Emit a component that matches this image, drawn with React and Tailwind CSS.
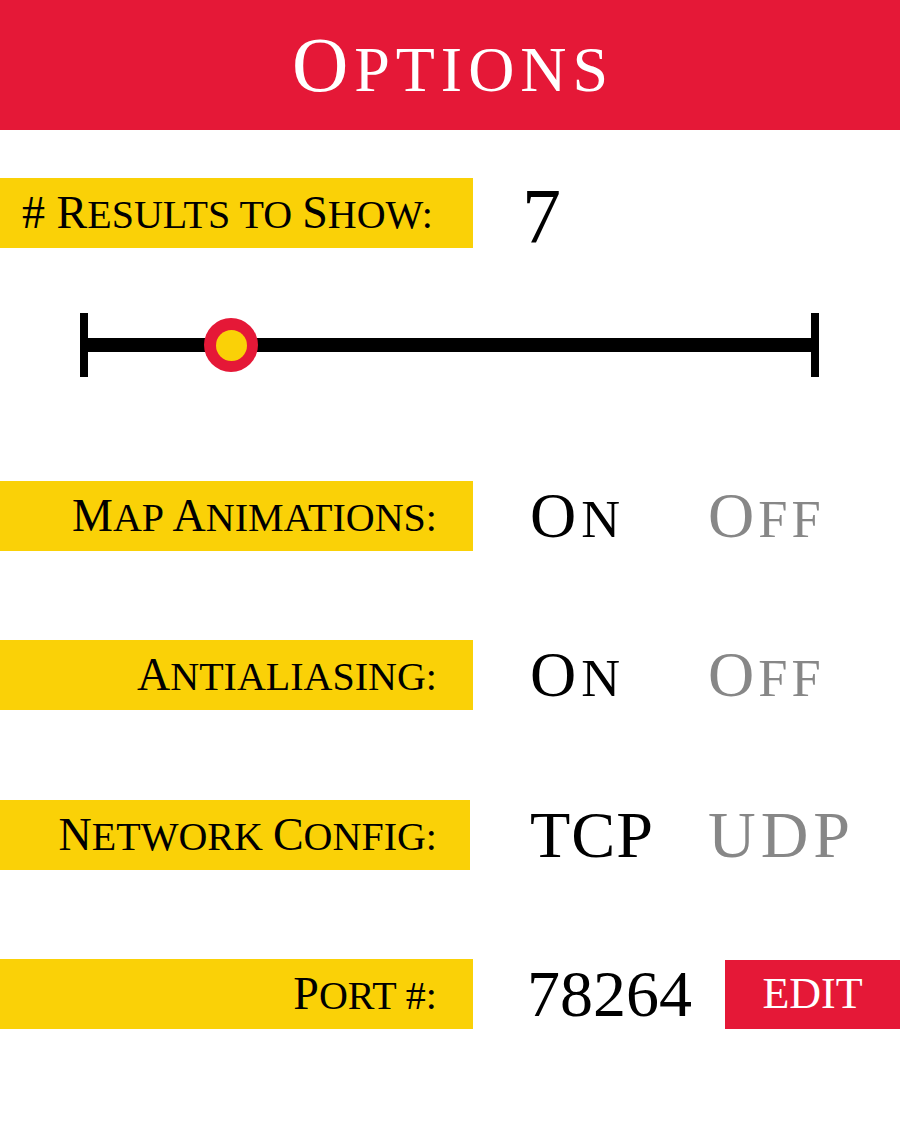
import React from "react";

function SC({ text, small = "text-[0.87em]" }) {
  const parts = [];
  let cur = "";
  let curLower = null;
  for (const ch of text) {
    const isLetter = /[A-Za-z]/.test(ch);
    if (!isLetter) {
      cur += ch;
      continue;
    }
    const isLower = ch >= "a" && ch <= "z";
    if (curLower === null || isLower === curLower) {
      cur += ch;
    } else {
      parts.push([cur, curLower]);
      cur = ch;
    }
    curLower = isLower;
  }
  if (cur) parts.push([cur, curLower]);
  return (
    <>
      {parts.map(([t, low], i) =>
        low ? (
          <span key={i} className={`${small} uppercase`}>
            {t}
          </span>
        ) : (
          <span key={i}>{t}</span>
        )
      )}
    </>
  );
}

function Label({ text, width = "w-[473px]", align = "justify-end pr-[36px]" }) {
  return (
    <div
      className={`${width} h-[70px] bg-[#fad107] flex items-center ${align} shrink-0`}
    >
      <span className="text-[46px] leading-none text-black whitespace-nowrap">
        <SC text={text} />
      </span>
    </div>
  );
}

function Toggle({ a, b }) {
  return (
    <div className="flex items-center">
      <div className="w-[178px] pl-[57px] box-content text-[64px] leading-none text-black tracking-[5px] whitespace-nowrap">
        <SC text={a} small="text-[0.84em]" />
      </div>
      <div className="text-[64px] leading-none text-[#878787] tracking-[4px] whitespace-nowrap">
        <SC text={b} small="text-[0.82em]" />
      </div>
    </div>
  );
}

export default function App() {
  return (
    <div className="w-[900px] h-[1125px] bg-white font-['Liberation_Serif',serif] overflow-hidden">
      <div className="h-[130px] bg-[#e51837] flex items-center justify-center">
        <span className="text-[78px] leading-none text-white tracking-[6px] pl-[6px]">
          <SC text="Options" small="text-[0.82em]" />
        </span>
      </div>

      <div className="mt-[48px] h-[70px] flex items-center">
        <Label text="# Results to Show:" align="justify-start pl-[22px]" />
        <div className="pl-[49px] text-[78px] leading-none text-black mt-[6px]">7</div>
      </div>

      <div className="mt-[65px] ml-[80px] w-[739px] h-[64px] relative flex items-center">
        <div className="w-[8px] h-full bg-black" />
        <div className="flex-1 h-[14px] bg-black" />
        <div className="w-[8px] h-full bg-black" />
        <div className="absolute left-[124px] top-[5px] w-[54px] h-[54px] rounded-full bg-[#e51837] flex items-center justify-center">
          <div className="w-[31px] h-[31px] rounded-full bg-[#fad107]" />
        </div>
      </div>

      <div className="mt-[104px] h-[70px] flex items-center">
        <Label text="Map Animations:" />
        <Toggle a="On" b="Off" />
      </div>

      <div className="mt-[89px] h-[70px] flex items-center">
        <Label text="Antialiasing:" />
        <Toggle a="On" b="Off" />
      </div>

      <div className="mt-[90px] h-[70px] flex items-center">
        <Label text="Network Config:" width="w-[470px]" align="justify-end pr-[33px]" />
        <div className="flex items-center">
          <div className="w-[178px] pl-[60px] box-content text-[66px] leading-none text-black tracking-[1px]">
            TCP
          </div>
          <div className="text-[66px] leading-none text-[#878787] tracking-[5px]">UDP</div>
        </div>
      </div>

      <div className="mt-[89px] h-[70px] flex items-center">
        <Label text="Port #:" />
        <div className="pl-[54px] w-[252px] text-[66px] leading-none text-black">78264</div>
        <div className="w-[175px] h-[69px] bg-[#e51837] flex items-center justify-center">
          <span className="text-[44px] leading-none text-white">EDIT</span>
        </div>
      </div>
    </div>
  );
}
